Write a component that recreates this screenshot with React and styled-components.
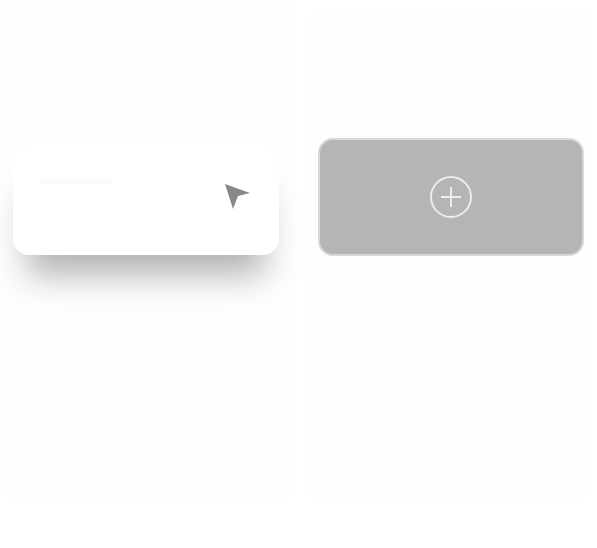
import React from "react";
import styled, { createGlobalStyle } from "styled-components";

const Global = createGlobalStyle`
  html, body { margin: 0; padding: 0; background: #ffffff; }
  body { font-family: "Liberation Sans", Arial, sans-serif; }
  * { box-sizing: border-box; }
`;

const Page = styled.div`
  width: 597px;
  height: 548px;
  display: grid;
  grid-template-columns: 296px 280px;
  column-gap: 14px;
`;

const LeftCol = styled.div`
  display: flex;
  flex-direction: column;
  padding: 145px 13px 0 13px;
  background: #fefefe;
  height: 500px;
  border-radius: 0 0 16px 16px;
`;

const ShareCard = styled.div`
  height: 110px;
  width: 266px;
  background: #ffffff;
  border-radius: 16px;
  box-shadow: 0 34px 34px -14px rgba(0, 0, 0, 0.3);
  display: flex;
  align-items: flex-start;
  justify-content: space-between;
  padding: 35px 28px 0 27px;
`;

const Placeholder = styled.div`
  width: ${(p) => p.w}px;
  height: ${(p) => p.h || 5}px;
  background: ${(p) => p.c || "#f6f6f6"};
  border-radius: 2px;
`;

const Cursor = styled.svg`
  width: 28px;
  height: 28px;
  margin-top: 3px;
`;

const RightCol = styled.div`
  margin-top: 8px;
  height: 492px;
  border: 1px solid #fcfcfc;
  border-radius: 16px;
  background: #fefefe;
  padding: 129px 6px 0 7px;
  display: flex;
  flex-direction: column;
`;

const AddButton = styled.button`
  width: 266px;
  height: 118px;
  background: #b5b5b5;
  border: 2px solid #d8d8d8;
  border-radius: 15px;
  display: flex;
  align-items: center;
  justify-content: center;
  padding: 0;
`;

const Rows = styled.div`
  margin-top: 30px;
  display: grid;
  grid-template-columns: 1fr 1fr;
  gap: 20px 10px;
  padding: 0 4px;
`;

const Bar = styled.div`
  height: 14px;
  background: #fdfdfd;
  border-radius: 3px;
  grid-column: ${(p) => (p.full ? "1 / span 2" : "auto")};
`;

export default function App() {
  return (
    <>
      <Global />
      <Page>
        <LeftCol>
          <ShareCard>
            <Placeholder w={72} h={4} c="#fafafa" />
            <Cursor viewBox="0 0 28 28">
              <polygon points="2,1 27,10 15,13 10,26" fill="#888888" />
            </Cursor>
          </ShareCard>
        </LeftCol>
        <RightCol>
          <AddButton aria-label="Add">
            <svg width="44" height="44" viewBox="0 0 44 44">
              <circle cx="22" cy="22" r="20" fill="none" stroke="#ececec" strokeWidth="2" />
              <line x1="22" y1="12" x2="22" y2="32" stroke="#ececec" strokeWidth="2" />
              <line x1="12" y1="22" x2="32" y2="22" stroke="#ececec" strokeWidth="2" />
            </svg>
          </AddButton>
          <Rows>
            <Bar />
            <Bar />
            <Bar />
            <Bar />
            <Bar />
            <Bar />
            <Bar full />
            <Bar full />
            <Bar full />
          </Rows>
        </RightCol>
      </Page>
    </>
  );
}
